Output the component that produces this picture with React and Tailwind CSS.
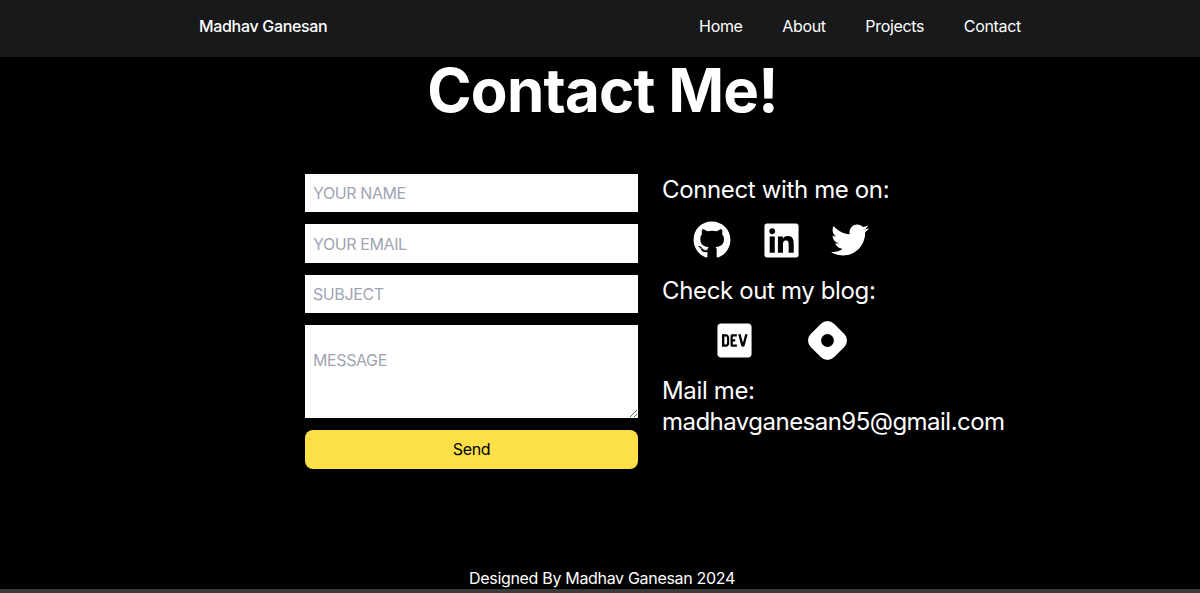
import { FaGithub, FaLinkedin, FaTwitter, FaDev } from 'react-icons/fa'
import { SiHashnode } from 'react-icons/si'

const NAV_LINKS = ['Home', 'About', 'Projects', 'Contact']

function Field({ placeholder }) {
  return (
    <input
      type="text"
      placeholder={placeholder}
      className="h-[38.4px] w-full bg-white px-2 text-base tracking-[-0.025em] text-black placeholder:text-[#a0a4b2] outline-none"
    />
  )
}

export default function App() {
  return (
    <div className="flex h-[593px] flex-col overflow-hidden bg-black font-['Inter',sans-serif] text-white">
      {/* Navbar */}
      <nav className="flex h-[57px] shrink-0 items-center justify-between bg-[#18191b] pb-[6px] pl-[199px] pr-[179px]">
        <span className="text-base font-medium tracking-[-0.02em]">Madhav Ganesan</span>
        <ul className="flex gap-[39.6px]">
          {NAV_LINKS.map(link => (
            <li key={link} className="text-base tracking-[-0.02em]">{link}</li>
          ))}
        </ul>
      </nav>

      <h1 className="mt-[-1px] pl-[5px] text-center text-6xl leading-[68px] font-bold tracking-[-0.013em]">Contact Me!</h1>

      <div className="mt-[50px] flex pl-[305px]">
        {/* Form */}
        <form className="flex w-[333px] flex-col gap-3">
          <Field placeholder="YOUR NAME" />
          <Field placeholder="YOUR EMAIL" />
          <Field placeholder="SUBJECT" />
          <textarea
            placeholder="MESSAGE"
            className="block h-[93px] w-full bg-white px-2 py-6 text-base leading-[22px] tracking-[-0.025em] text-black placeholder:text-[#a0a4b2] outline-none"
          />
          <button type="button" className="h-[38.4px] rounded-lg bg-[#fde047] text-base tracking-[-0.02em] text-black">Send</button>
        </form>

        {/* Links */}
        <div className="ml-6 flex flex-col text-2xl leading-[31px] tracking-[-0.015em]">
          <p>Connect with me on:</p>
          <div className="my-4 flex h-[38px] items-center pl-[31px]">
            <FaGithub size={38} />
            <FaLinkedin size={39} className="ml-[31px]" />
            <FaTwitter size={38} className="ml-[30px]" />
          </div>
          <p>Check out my blog:</p>
          <div className="mt-[15px] mb-4 flex h-[38px] items-center pl-[53px]">
            <FaDev size={39} />
            <SiHashnode size={39} className="ml-[54px]" />
          </div>
          <p>Mail me:</p>
          <p className="tracking-[-0.022em]">madhavganesan95@gmail.com</p>
        </div>
      </div>

      <footer className="mt-auto pb-[1px] pl-[4px] text-center text-base leading-[20px] tracking-[-0.02em]">Designed By Madhav Ganesan 2024</footer>
      <div className="h-1 shrink-0 bg-[#3b3b3b]" />
    </div>
  )
}
